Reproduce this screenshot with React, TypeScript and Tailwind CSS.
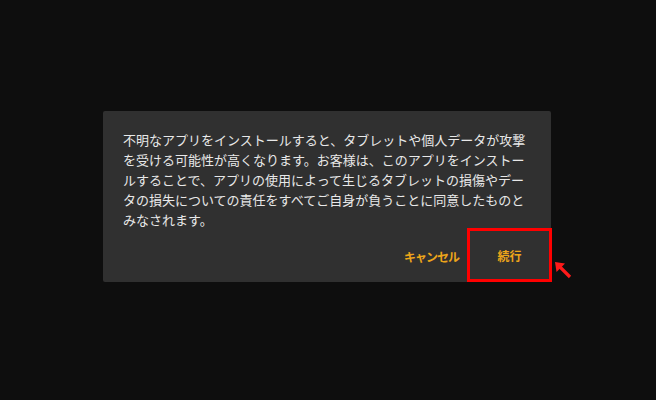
export default function App() {
  return (
    <div
      className="relative w-[656px] h-[400px] bg-[#0e0e0e] overflow-hidden"
      style={{ fontFamily: '"Noto Sans CJK JP", "Noto Sans", sans-serif' }}
    >
      <div className="pt-[111px] pl-[103px]">
        {/* Dialog */}
        <div className="w-[448px] h-[171px] bg-[#303030] rounded-[2px] flex flex-col">
          <p className="pt-[19px] px-[20px] text-[13px] leading-[20px] text-[#e8e8e8] h-[117px]">
            不明なアプリをインストールすると、タブレットや個人データが攻撃を受ける可能性が高くなります。お客様は、このアプリをインストールすることで、アプリの使用によって生じるタブレットの損傷やデータの損失についての責任をすべてご自身が負うことに同意したものとみなされます。
          </p>
          <div className="flex justify-end items-stretch h-[54px]">
            <button className="pr-[8px] text-[12px] tracking-[-1px] font-bold text-[#eda51a] leading-none pt-[3px]">
              キャンセル
            </button>
            <button className="w-[85px] h-[54px] border-[3px] border-[#ff0000] text-[12px] font-bold text-[#eda51a] leading-none pt-[2px] -mr-[1px]">
              続行
            </button>
          </div>
        </div>
      </div>

      {/* Annotation arrow */}
      <svg
        className="absolute left-[555px] top-[262px]"
        width="17"
        height="17"
        viewBox="0 0 17 17"
      >
        <polygon points="0,0 10,1.5 1.5,10" fill="#ff1a1a" />
        <line x1="4" y1="4" x2="15" y2="15" stroke="#ff1a1a" strokeWidth="3.2" />
      </svg>
    </div>
  );
}
